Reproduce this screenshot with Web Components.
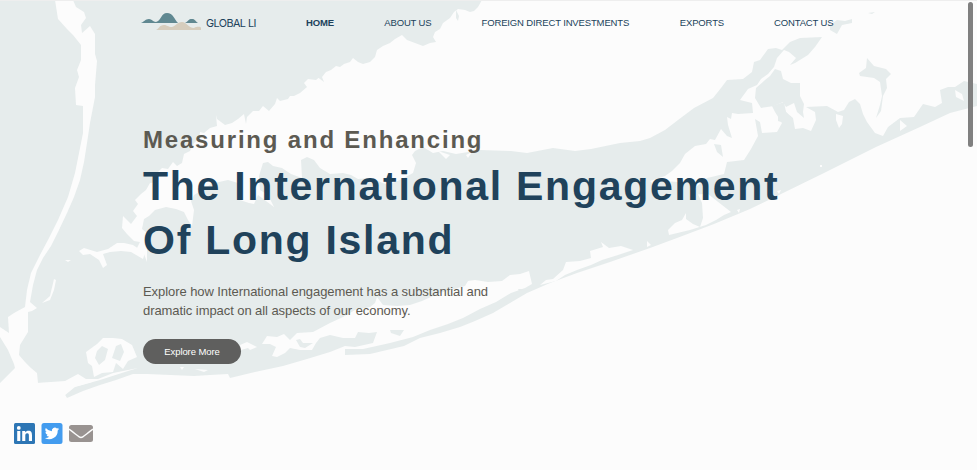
<!DOCTYPE html>
<html lang="en"><head><meta charset="utf-8"><title>Global LI</title>
<style>html,body{margin:0;height:100%;overflow:hidden}body{font-family:"Liberation Sans",Arial,sans-serif;background:#fcfcfc}</style></head>
<body><global-page></global-page>
<script>
function define(name, html){
  const t=document.createElement('template');t.innerHTML=html;
  customElements.define(name,class extends HTMLElement{
    constructor(){super();this.attachShadow({mode:'open'}).append(t.content.cloneNode(true));}
  });
}
define('island-map',`<style>:host{position:absolute;inset:0;z-index:-1}svg{display:block}.l{fill:#e6ecec}.w{fill:#fcfcfc}</style>
<svg width="977" height="470" viewBox="0 0 977 470" aria-hidden="true">
<path class="l" d="M0 0H482L478 7 474 11 470 12 465 10 458 9 454 12 450 18 443 23 440 29 435 32 433 37 436 42 430 43 423 46 415 43 407 40 402 35 395 39 390 43 383 46 377 50 375 57 370 62 363 64 358 62 353 58 350 62 344 64 340 67 336 66 331 70 326 72 322 77 324 82 316 76 314 67 319 70 323 74 316 80 308 79 304 83 307 87 300 93 294 96 290 96 288 99 280 101 277 98 275 104 269 111 263 106 259 111 253 111 247 117 246 124 244 114 238 119 232 123 225 125 217 119 216 115 217 126 210 128 204 133 200 132 199 139 194 143 190 151 184 154 182 163 177 166 173 162 168 169 162 168 156 174 158 182 150 183 146 190 141 194 135 200 138 204 133 211 137 216 131 224 123 216 122 228 127 234 134 241 140 242 136 250 144 254 147 262 V233L142 229 144 219 149 216 155 210 166 207 176 209 184 212 188 220 192 226 194 210 191 201 194 195 204 189 211 184 219 182 228 180 238 183 242 188 240 200 249 203 254 204 258 195 266 201 274 207 268 195 260 190 259 176 263 163 268 162 273 166 282 168 291 174 302 178 301 160 307 157 314 160 320 168 330 174 343 173 351 175 358 179 370 178 388 185 402 179 413 173 416 163 412 155 415 151 423 147 433 153 443 151 456 154 480 150 511 151 527 153 553 148 575 151 591 149 620 143 640 141 650 138 665 130 678 120 694 108 713 98 721 88 727 80 743 79 752 72 754 62 760 60 768 49 776 48 782 50 790 42 800 38 822 37 815 47 808 55 795 63 790 65 796 58 789 52 784 50 777 58 774 67 768 74 761 79 757 85 748 89 740 100 752 103 753 113 738 114 732 113 731 119 727 117 728 125 732 138 727 136 721 129 715 140 710 139 706 144 695 146 685 154 680 163 672 171 665 176 650 181 660 192 690 192 707 178 724 174 727 162 744 160 751 149 758 136 755 119 760 122 762 133 777 132 782 123 775 112 772 106 784 102 786 112 793 118 795 129 803 128 811 131 816 120 815 112 806 107 827 106 838 112 844 110 849 102 855 99 860 104 863 114 867 122 875 133 883 136 888 127 900 118 914 117 923 104 935 107 942 103 940 90 948 87 955 87 964 81 977 84V106L950 113 920 127 876 147 824 173 779 195 750 209 714 224 677 238 650 248 610 262 577 273 550 283 527 293 510 303 493 313 475 321 460 327 440 333 420 338 404 346 387 350 370 354 345 355V346L330 352 307 359 283 366 255 372 230 378 228 374 210 375 194 376 147 374 133 374 116 380 100 385 83 391 67 398 64 393 67 389 92 382 37 383 28 377 15 375 0 384Z"/>
<g class="w">
<path d="M55 0H73L76 7 84 12 86 18 81 25 82 33 90 26 95 34 95 54 97 61 95 85 95 97 90 123 87 143 84 162 80 180 74 197 67 213 58 232 51 246 43 258 37 270 33 285 30 302 37 308 32 311 28 312 28 322 28 332 20 345 19 355 25 362 31 368 37 373 38 383 0 401V383L15 368 14 364 8 350 0 337V327L9 333 8 317 14 313 25 307 27 290 31 273 40 255 49 238 58 220 68 197 75 173 83 133 83 106 76 105 75 88 79 77 77 70 81 60 81 45 73 35 67 29 58 19Z"/>
<path d="M79 251L84 248 97 252 108 249 117 243 124 243 133 245 145 253 143 259 131 252 121 251 110 252 103 254 107 265 103 268 99 260 90 254 83 255ZM54 279L56 280 54 290 50 300 42 303 50 296ZM65 260L71 260 68 262Z"/>
<path d="M86 352L97 344 103 338 113 338 122 339 132 345 137 357 128 361 123 369 116 363 113 372 102 373 94 377 92 366 88 363Z"/>
<path d="M37 383L65 381 78 374 86 379 98 379 113 373 138 368 128 371 100 380 75 387 64 396 60 403 34 392Z"/>
<path d="M240 345L247 342 257 347 250 350 248 348 241 350ZM262 344L267 336 277 337 284 334 290 340 297 333 313 332 330 323 343 317 355 310 370 307 375 303 377 297 383 305 397 306 410 305 422 301 440 293 465 286 468 281 475 280 488 282 502 281 510 275 520 274 529 271 532 284 525 288 511 293 496 302 480 309 463 318 448 324 430 330 413 337 390 343 363 349 345 349 345 346 355 347 373 343 377 332 369 333 358 332 355 338 343 338 330 335 320 338 316 343 312 350 300 350 290 348 285 353 277 357 272 356 276 347 270 344Z"/>
<path d="M553 279L563 270 566 262 580 261 591 258 590 251 603 247 601 242 609 248 621 246 633 250 618 255 602 260 591 265 577 270 565 275 556 281 540 285 546 280ZM647 241L651 245 647 247ZM668 230L675 223 682 220 686 213 686 219 693 224 700 227 703 218 702 203 697 192 708 194 722 205 731 212 724 215 716 220 706 225 690 230 669 235ZM737 210L740 209 739 213ZM777 191L781 190 779 194Z"/>
<path d="M836 114L843 116 842 124 839 128 836 120ZM900 120L907 126 900 131ZM955 90L962 94 964 101 956 97ZM786 83L792 87 799 88 798 93 791 91ZM820 165h2v2h-2Z"/>
<path d="M229 354L241 349 240 356ZM180 367L184 367 182 370ZM195 369L208 370 204 372Z"/>
</g>
<g class="l">
<path d="M775 69L781 71 783 79 791 83 800 83 800 96 804 104 803 112 804 118 797 112 794 103 786 107 783 102 774 106 761 108 755 98 756 88 765 80 770 76Z"/>
<path d="M782 105L788 115 793 119 790 125 778 121 778 112ZM867 58L874 66 886 69 891 74 886 79 887 88 883 96 881 111 876 118 880 105 882 96 880 82 874 78 860 76 859 73 866 68ZM830 25L837 20 845 21 852 19 852 23 842 25 837 34 830 30ZM868 13L875 12 872 14ZM714 144L721 145 723 157 717 152Z"/>
<path d="M97 351L102 346 108 349 105 360 99 365 95 358ZM116 346L121 344 124 352 120 361 112 358ZM390 330L404 330 400 336 391 333ZM456 10L459 16 458 21 456 18ZM425 154L428 155 427 158Z"/>
<path d="M296 340L300 339 303 343 313 343 305 348 300 347ZM518 289L524 289 519 291Z"/>
<path d="M655 183L665 181 690 183 700 189 704 194 690 195 660 195Z"/>
</g>
<path d="M438 151L450 155 446 159ZM466 155L472 152 468 158Z" class="w"/>
</svg>`);
define('brand-logo',`<style>:host{display:flex;width:164px;height:20px;align-items:center;color:#20425b}svg{display:block;flex:none}span{font:10.8px/16px Inter,sans-serif;margin:3px 0 0 3px;letter-spacing:-.55px;white-space:nowrap}</style>
<svg width="62" height="20" viewBox="0 0 62 20"><path fill="#608891" d="M0 11C3 10 4 7 8 7 11 7 12 10 15 10 20 9 20 1 26 1 32 1 33 7 37 11ZM44 11C48 9 47 7 51 7 54 7 54 9 57 11Z"/><path fill="#d6cdbd" d="M15 18C18 17 18 13 23 13 26 13 27 15 31 15 35 14 36 10 41 10 46 10 47 16 53 16 57 14 60 15 60 16V18Z"/></svg><span>GLOBAL LI</span>`);
define('nav-link',`<style>:host{display:block;font-size:9.5px;line-height:14px;color:#20425b;white-space:nowrap;letter-spacing:-.14px}:host([active]){font-weight:700}a{color:inherit;text-decoration:none}</style><a><slot></slot></a>`);
define('site-header',`<style>:host{display:flex;height:44px;box-sizing:border-box;border-top:1px solid #eee;padding:11px 144px 0 141px;align-items:flex-start}nav{display:flex;flex:1;justify-content:space-between;padding:4px 0 0 1px}</style>
<brand-logo></brand-logo><nav><nav-link active style="width:28px">HOME</nav-link><nav-link style="width:47px">ABOUT US</nav-link><nav-link style="width:148px">FOREIGN DIRECT INVESTMENTS</nav-link><nav-link style="width:44px">EXPORTS</nav-link><nav-link style="width:59px">CONTACT US</nav-link></nav>`);
define('pill-button',`<style>:host{display:inline-flex;width:98px;height:25px;margin-top:19px}button{width:100%;border:0;border-radius:13px;background:#5f5f5e;color:#fff;font:9.5px "Liberation Sans",sans-serif;letter-spacing:-.1px;padding:0}</style><button><slot></slot></button>`);
define('hero-copy',`<style>:host{display:block;padding:81px 0 0 143px}h2,h1,p{margin:0;white-space:nowrap}h2{font-size:24px;line-height:30px;color:#5c5a52;letter-spacing:1.81px}h1{font-size:41px;line-height:54px;color:#20425b;letter-spacing:1.74px;margin-top:4px}p{font-size:13px;line-height:18.5px;color:#5c5a52;margin-top:16px;letter-spacing:-.07px}</style>
<h2>Measuring and Enhancing</h2><h1>The International Engagement<br>Of Long Island</h1><p>Explore how International engagement has a substantial and<br>dramatic impact on all aspects of our economy.</p><pill-button>Explore More</pill-button>`);
define('social-links',`<style>:host{display:flex;gap:6px;padding-left:14px;position:fixed;left:0;top:423px}svg{display:block}</style>
<svg width="21" height="21" viewBox="0 0 21 21"><rect width="21" height="21" rx="1.5" fill="#2d76b5"/><g fill="#fff"><circle cx="4.8" cy="4.9" r="1.9"/><path d="M3.2 8h3.1v10H3.2ZM8.2 8h3v1.4C12 8.2 13 7.7 14.4 7.7c3 0 3.6 2 3.6 4.6V18h-3.1v-5c0-1.300 0-2.700-1.700-2.700s-1.900 1.300-1.900 2.600V18H8.200Z"/></g></svg>
<svg width="22" height="21" viewBox="0 0 22 21"><rect x=".5" width="21" height="21" rx="2.500" fill="#439cef"/><path transform="translate(3.800 3.200) scale(.6)" fill="#fff" d="M24 4.600a10 10 0 0 1-2.800.8 5 5 0 0 0 2.100-2.700 10 10 0 0 1-3.100 1.200 4.900 4.900 0 0 0-8.400 4.500A14 14 0 0 1 1.700 3.100a4.900 4.900 0 0 0 1.500 6.600A4.900 4.900 0 0 1 1 9.100a4.900 4.900 0 0 0 3.900 4.900 5 5 0 0 1-2.200.1 4.900 4.900 0 0 0 4.600 3.400A9.900 9.900 0 0 1 0 19.500 14 14 0 0 0 21.500 7.100 10 10 0 0 0 24 4.600Z"/></svg>
<svg width="24" height="21" viewBox="0 0 24 21"><rect y="2" width="24" height="17" rx="2.500" fill="#999391"/><path d="M0 6.200C4.500 9.300 8 12.500 10.200 13.900Q12 15 13.800 13.900C16 12.500 19.500 9.300 24 6.200" fill="none" stroke="#fcfcfc" stroke-width="1.400"/></svg>`);
define('scroll-thumb',`<style>:host{position:fixed;right:4px;top:2px;width:5px;height:145px;border-radius:3px;background:#808080}</style>`);
define('global-page',`<style>:host{display:block;position:relative;width:977px;height:470px;isolation:isolate;overflow:hidden}</style><island-map></island-map><site-header></site-header><hero-copy></hero-copy><social-links></social-links><scroll-thumb></scroll-thumb>`);
</script></body></html>
